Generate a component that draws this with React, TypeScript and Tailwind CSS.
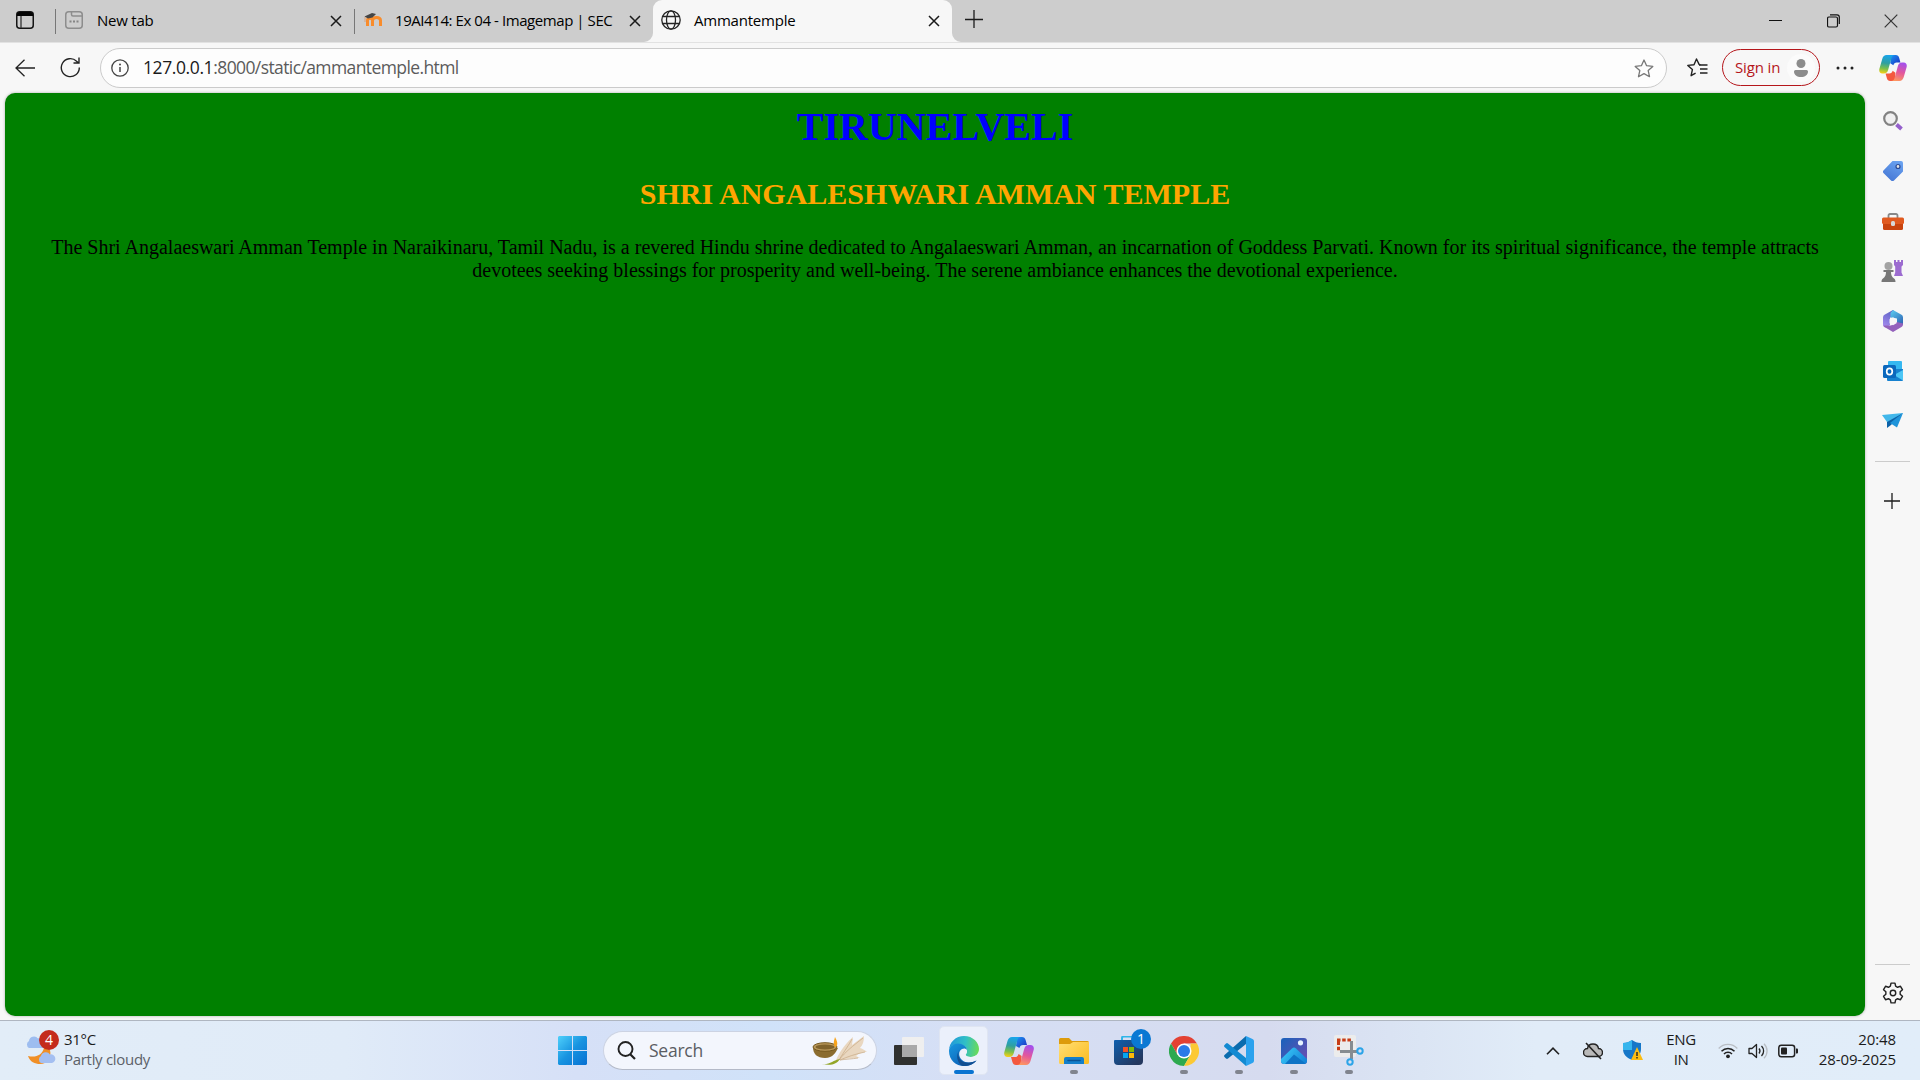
import React from "react";

type SvgProps = { w: number; h: number; vb?: string; className?: string; children: React.ReactNode };

function Svg({ w, h, vb, className, children }: SvgProps) {
  return (
    <svg width={w} height={h} viewBox={vb ?? `0 0 ${w} ${h}`} fill="none" className={`shrink-0 ${className ?? ""}`}>
      {children}
    </svg>
  );
}

function CloseX() {
  return (
    <Svg w={12} h={12}>
      <path d="M1 1l10 10M11 1L1 11" stroke="#1a1a1a" strokeWidth="1.5" />
    </Svg>
  );
}

function Copilot({ w, h, id }: { w: number; h: number; id: string }) {
  return (
    <Svg w={w} h={h} vb="0 0 30 28">
      <defs>
        <linearGradient id={`${id}a`} x1="10" y1="0" x2="7" y2="20" gradientUnits="userSpaceOnUse">
          <stop stopColor="#18a5ee" />
          <stop offset=".45" stopColor="#2f9fa0" />
          <stop offset=".75" stopColor="#7cc04a" />
          <stop offset="1" stopColor="#f2cf18" />
        </linearGradient>
        <linearGradient id={`${id}b`} x1="23" y1="8" x2="17" y2="28" gradientUnits="userSpaceOnUse">
          <stop stopColor="#a450ec" />
          <stop offset=".5" stopColor="#e3579c" />
          <stop offset="1" stopColor="#ff9a5c" />
        </linearGradient>
        <linearGradient id={`${id}c`} x1="14" y1="0" x2="22" y2="8" gradientUnits="userSpaceOnUse">
          <stop stopColor="#1b8df0" />
          <stop offset="1" stopColor="#1d3fc9" />
        </linearGradient>
      </defs>
      <path d="M13 0h5c2 0 3 1 3.600 3L23 8h-4c-2 0-3 1-3.600 3L12 9z" fill={`url(#${id}c)`} />
      <path d="M17 28h-5c-2 0-3-1-3.600-3L7 20h4c2 0 3-1 3.600-3l3 2z" fill="#f4583e" />
      <path d="M8 0h9c-2 0-3 1.200-3.600 3L9.800 16c-.8 2.800-2 4-4.500 4H3.500C.8 20-.3 17.800.3 15.200L3.500 4C4.300 1.400 5.800 0 8 0z" fill={`url(#${id}a)`} />
      <path d="M22 28h-9c2 0 3-1.200 3.600-3l3.600-13c.8-2.800 2-4 4.500-4h1.800c2.700 0 3.800 2.200 3.200 4.800L26.500 24c-.8 2.600-2.300 4-4.500 4z" fill={`url(#${id}b)`} />
    </Svg>
  );
}

function Tab({ icon, title, children }: { icon: React.ReactNode; title: string; children?: React.ReactNode }) {
  return (
    <div className="flex h-[34px] w-[299px] shrink-0 items-center">
      {children}
      <div className="flex w-5 shrink-0 justify-center">{icon}</div>
      <span className={`ml-[12px] flex-1 truncate pb-[3px] text-[15px] leading-5 ${title.length > 20 ? "tracking-[-0.43px]" : "pl-px tracking-[-0.22px]"}`}>{title}</span>
      <CloseX />
      <span className="w-[12px]" />
    </div>
  );
}

function TabStrip() {
  return (
    <header className="flex h-[42px] shrink-0 items-center bg-[#cdcdcd]">
      <div className="flex w-[55px] justify-center">
        <Svg w={18} h={18} className="mb-[2px] mr-[5px]">
          <rect x=".75" y=".75" width="16.500" height="16.500" rx="3" stroke="#151515" strokeWidth="1.500" />
          <path d="M1 5V3.500A2.500 2.500 0 013.500 1h11A2.500 2.500 0 0117 3.500V5z" fill="#050505" />
          <path d="M5 5v12" stroke="#333" strokeWidth="1.300" />
        </Svg>
      </div>
      <Tab
        title="New tab"
        icon={
          <Svg w={18} h={18} className="mb-[2px]">
            <rect x=".75" y=".75" width="16.500" height="16.500" rx="3" stroke="#8d8d8d" strokeWidth="1.500" />
            <path d="M6.500 1v2.500a1.500 1.500 0 001.500 1.500h9" stroke="#8d8d8d" strokeWidth="1.500" />
            <path d="M4.500 10.500h2M8 10.500h2M11.500 10.500h2" stroke="#858585" strokeWidth="1.800" />
          </Svg>
        }
      >
        <span className="mr-[8px] h-[25px] w-px bg-[#777]" />
      </Tab>
      <Tab
        title="19AI414: Ex 04 - Imagemap | SEC"
        icon={
          <Svg w={20} h={16} className="mb-[2px]">
            <path d="M4.500 14V8.500c0-3 5-3 5 0V14M9.500 14V8.500c0-4 8-4 8 0V14" stroke="#f98c2b" strokeWidth="3" />
            <path d="M1.500 4.500L9 1l4 1-3.500 3.500-4.500 1z" fill="#454545" />
            <path d="M2 5v5" stroke="#d9a078" strokeWidth="1" />
          </Svg>
        }
      >
        <span className="mr-[8px] h-[25px] w-px bg-[#777]" />
      </Tab>
      <div className="relative flex h-[42px] w-[299px] shrink-0 items-start rounded-t-[9px] bg-[#f7f7f7] pt-[4px]">
        <Svg w={9} h={9} className="absolute -left-[9px] bottom-0">
          <path d="M0 9a9 9 0 009-9v9z" fill="#f7f7f7" />
        </Svg>
        <Svg w={9} h={9} className="absolute -right-[9px] bottom-0">
          <path d="M9 9a9 9 0 01-9-9v9z" fill="#f7f7f7" />
        </Svg>
        <Tab
          title="Ammantemple"
          icon={
            <Svg w={20} h={20} className="mb-[2px]">
              <g stroke="#242424" strokeWidth="1.300">
                <circle cx="10" cy="10" r="9.200" />
                <ellipse cx="10" cy="10" rx="4.500" ry="9.200" />
                <path d="M2 6.500h16M2 13.500h16" />
              </g>
            </Svg>
          }
        >
          <span className="w-[8px]" />
        </Tab>
      </div>
      <Svg w={18} h={18} className="mb-[4px] ml-[13px]">
        <path d="M9 0v18M0 9.500h18" stroke="#1c1c1c" strokeWidth="1.300" />
      </Svg>
      <div className="ml-auto flex items-center pr-[22px]">
        <Svg w={13} h={14} className="mr-[45px]">
          <path d="M0 6.500h13" stroke="#111" />
        </Svg>
        <Svg w={13} h={14} className="mr-[44px]">
          <rect x=".5" y="3" width="10" height="10" rx="1.500" stroke="#111" strokeWidth="1.200" />
          <path d="M3 .8h7a2.300 2.300 0 012.300 2.300V10" stroke="#111" strokeWidth="1.200" />
        </Svg>
        <Svg w={14} h={14}>
          <path d="M.7.7l12.600 12.600M13.300.7L.7 13.300" stroke="#333" strokeWidth="1.200" />
        </Svg>
      </div>
    </header>
  );
}

const star = "M9.500 1l2.600 5.700 6.200.7-4.600 4.200 1.300 6.100-5.500-3.100L4 17.700l1.300-6.100L.7 7.400l6.200-.7z";

function Toolbar() {
  return (
    <div className="flex h-[51px] shrink-0 items-center border-t border-[#e2e2e2] bg-[#f7f7f7]">
      <Svg w={20} h={18} className="ml-[15px]">
        <path d="M9.500 .7L1 9l8.500 8.300M1 9h19" stroke="#222" strokeWidth="1.300" />
      </Svg>
      <Svg w={21} h={21} className="mb-px ml-[25px]">
        <path d="M19.300 10.500a9 9 0 11-2.700-6.300l2 1.800M19 .5v5.500h-5.500" stroke="#222" strokeWidth="1.400" />
      </Svg>
      <div className="ml-[19px] flex h-[40px] w-[1567px] shrink-0 items-center rounded-full border border-[#cbcbcb] bg-[#fdfdfd] pl-[10px] pr-[12px]">
        <Svg w={18} h={18}>
          <circle cx="9" cy="9" r="8.200" stroke="#444" strokeWidth="1.300" />
          <path d="M9 8v5" stroke="#444" strokeWidth="1.500" />
          <circle cx="9" cy="5.500" r="1" fill="#444" />
        </Svg>
        <span className="ml-[14px] flex-1 pb-[2px] text-[17.500px] tracking-[-0.6px] text-[#5b5b5b]">
          <span className="tracking-[-0.4px] text-[#1a1a1a]">127.0.0.1</span>:8000/static/ammantemple.html
        </span>
        <Svg w={20} h={19} vb="0 0 19 19">
          <path d={star} stroke="#777" strokeWidth="1.300" strokeLinejoin="round" />
        </Svg>
      </div>
      <Svg w={21} h={20} className="ml-[20px]">
        <path d="M13.500 6.800l-1.400-.4L9.500 1 7 6.700l-6.200.7 4.600 4.200-1.300 6.100 4.500-2.500" stroke="#222" strokeWidth="1.400" strokeLinejoin="round" />
        <path d="M12 7h8.500M13 11h7.500M13 15h7.500" stroke="#222" strokeWidth="1.400" />
      </Svg>
      <div className="mb-px ml-[14px] flex h-[37px] w-[98px] shrink-0 items-center rounded-full border border-[#b5161b] pl-[12px] text-[15px] text-[#b5161b]">
        <span className="whitespace-nowrap pb-px tracking-[-0.15px]">Sign in</span>
        <div className="ml-auto mr-[4px] flex h-7 w-7 items-center justify-center rounded-full bg-[#fbfbfb]">
          <Svg w={14} h={18}>
            <circle cx="7" cy="4.500" r="4.500" fill="#8c8c8c" />
            <path d="M1.500 11h11a1.500 1.500 0 011.500 1.500C14 16 11 18 7 18s-7-2-7-5.500A1.500 1.500 0 011.500 11z" fill="#8c8c8c" />
          </Svg>
        </div>
      </div>
      <Svg w={18} h={4} className="ml-[16px]">
        <g fill="#222">
          <circle cx="2" cy="2" r="1.500" />
          <circle cx="9" cy="2" r="1.500" />
          <circle cx="16" cy="2" r="1.500" />
        </g>
      </Svg>
      <div className="ml-auto mr-[13px]">
        <Copilot w={28} h={26} id="tb" />
      </div>
    </div>
  );
}

function SideSlot({ children }: { children: React.ReactNode }) {
  return <div className="flex h-[50px] w-full shrink-0 items-center justify-center">{children}</div>;
}

function Sidebar() {
  return (
    <aside className="flex w-[55px] shrink-0 flex-col items-center pt-[3px]">
      <SideSlot>
        <Svg w={20} h={20}>
          <circle cx="7.500" cy="7.500" r="6.300" fill="#f0f0f0" stroke="#828282" strokeWidth="2.200" />
          <path d="M13.500 13.500l5 4.500" stroke="#9560cc" strokeWidth="4" />
        </Svg>
      </SideSlot>
      <SideSlot>
        <Svg w={20} h={20}>
          <defs>
            <linearGradient id="tag" x1="15" y1="0" x2="5" y2="20" gradientUnits="userSpaceOnUse">
              <stop stopColor="#6aa2f0" />
              <stop offset="1" stopColor="#4577d4" />
            </linearGradient>
          </defs>
          <path d="M9.500 0H18a2 2 0 012 2v8.500L11 19.400a2 2 0 01-3 0L.7 12.200a2 2 0 010-3z" fill="url(#tag)" />
          <circle cx="15" cy="5.500" r="2" fill="#e4e4e4" stroke="#2b4a94" strokeWidth="1.200" />
        </Svg>
      </SideSlot>
      <SideSlot>
        <Svg w={22} h={17}>
          <path d="M6.500 5V2.500A1.500 1.500 0 018 1h6a1.500 1.500 0 011.500 1.500V5" stroke="#888" strokeWidth="1.800" />
          <path d="M1 10h20v5.500a1.500 1.500 0 01-1.500 1.500h-17A1.500 1.500 0 011 15.500z" fill="#c9440f" />
          <rect y="4.500" width="22" height="6.500" rx="1.500" fill="#e05a20" />
          <rect x="9" y="8" width="4" height="5" rx="1.500" fill="#d8d8d8" />
        </Svg>
      </SideSlot>
      <SideSlot>
        <Svg w={23} h={23}>
          <path d="M13 0h2v2h1.500V0h2v2H20V0h2v5l-1.500 1.500v6L22 16h-9l1.200-3.500v-6L13 5z" fill="#9c6bd0" />
          <circle cx="7.500" cy="6" r="4" fill="#a3a3a3" />
          <path d="M2.500 10h10v2H10c0 3 .8 5 3 6.500.9.700 1.500 1.500 1.500 3.500H.5c0-2 .6-2.800 1.500-3.500C4.200 17 5 15 5 12H2.500z" fill="#777" />
        </Svg>
      </SideSlot>
      <SideSlot>
        <Svg w={20} h={22}>
          <defs>
            <linearGradient id="m1" x1="10" y1="0" x2="2" y2="18" gradientUnits="userSpaceOnUse">
              <stop stopColor="#5a62c4" />
              <stop offset="1" stopColor="#a78cf0" />
            </linearGradient>
            <linearGradient id="m2" x1="8" y1="2" x2="20" y2="15" gradientUnits="userSpaceOnUse">
              <stop stopColor="#58c4ec" />
              <stop offset="1" stopColor="#2c5fb0" />
            </linearGradient>
          </defs>
          <path d="M10 0L1.500 4.800A3 3 0 000 7.400v7.200A3 3 0 003 17.500l4-2.500V8l5-6z" fill="url(#m1)" />
          <path d="M10 0l8.500 4.800A3 3 0 0120 7.400V15l-6-2V8.500L7.500 7.500V3z" fill="url(#m2)" />
          <path d="M20 13.500v1a3 3 0 01-1.500 2.600L10 22l-8.500-4.900L.3 15.500 8 15.500l6-3.500z" fill="#9462bc" />
          <path d="M10 7.200l3.500 2v4l-3.500 2-3.500-2v-4z" fill="#f7f7f7" />
        </Svg>
      </SideSlot>
      <SideSlot>
        <Svg w={20} h={20}>
          <rect x="5" width="14" height="9" rx="1" fill="#35b8f1" />
          <path d="M4 8h16v11a1 1 0 01-1 1H5a1 1 0 01-1-1z" fill="#1681cf" />
          <path d="M20 9v10.500L11 14z" fill="#4cc6f5" />
          <rect y="4" width="13" height="13" rx="1.500" fill="#0b68bd" />
          <ellipse cx="6.500" cy="10.500" rx="2.800" ry="3.200" stroke="#fff" strokeWidth="1.700" />
        </Svg>
      </SideSlot>
      <SideSlot>
        <Svg w={22} h={16}>
          <path d="M0 2l21-2-9 8-7 1z" fill="#42b7ea" />
          <path d="M21 0L5 9v6l4-3z" fill="#0c62a8" />
          <path d="M21 0L8 10l7 4.500z" fill="#1e94da" />
        </Svg>
      </SideSlot>
      <div className="mt-[15px] h-px w-[35px] bg-[#cccccc]" />
      <Svg w={16} h={16} className="mr-px mt-[31px]">
        <path d="M8 0v16M0 8h16" stroke="#1c1c1c" strokeWidth="1.300" />
      </Svg>
      <div className="mt-auto h-px w-[35px] bg-[#cccccc]" />
      <Svg w={22} h={22} vb="0 0 20 20" className="mb-[16px] mt-[17px]">
        <path
          d="M8.200 1h3.600l.6 2.800 1.700 1 2.700-.9 1.800 3.100-2.100 1.900v2.200l2.100 1.900-1.800 3.100-2.700-.9-1.700 1-.6 2.800H8.200l-.6-2.800-1.700-1-2.700.9-1.800-3.100 2.100-1.900V8.900L1.400 7l1.800-3.100 2.700.9 1.700-1z"
          stroke="#222"
          strokeWidth="1.300"
          strokeLinejoin="round"
        />
        <circle cx="10" cy="10" r="2.500" stroke="#222" strokeWidth="1.300" />
      </Svg>
    </aside>
  );
}

function TaskSlot({ children, mark }: { children: React.ReactNode; mark?: boolean }) {
  return (
    <div className="relative flex h-[59px] w-[55px] shrink-0 items-center justify-center">
      {children}
      {mark && <span className="absolute bottom-[6px] h-1 w-2 rounded-full bg-[#80848e]" />}
    </div>
  );
}

function Edge() {
  return (
    <Svg w={30} h={30}>
      <defs>
        <linearGradient id="e1" x1="2" y1="8" x2="30" y2="12" gradientUnits="userSpaceOnUse">
          <stop stopColor="#239cd8" />
          <stop offset=".5" stopColor="#30bfc6" />
          <stop offset="1" stopColor="#6bdc55" />
        </linearGradient>
        <linearGradient id="e2" x1="0" y1="10" x2="14" y2="30" gradientUnits="userSpaceOnUse">
          <stop stopColor="#1794dc" />
          <stop offset="1" stopColor="#0d62b8" />
        </linearGradient>
      </defs>
      <path d="M0 15C0 6 7 0 15 0c9 0 15 6.500 15 13 0 5-4 8-8.500 8-3 0-5-1-5-2.200 0-.8 1.500-1.300 1.500-3.800C18 11 14 8 9 8c-5 0-9 3-9 7z" fill="url(#e1)" />
      <path d="M0 15c0-4 4-7.500 9-7.500 5 0 8.500 3 9 6.500-1-1.500-3-2-5-1-4 2-3.500 8 0 11 4 3.500 10 3 14.500.5C25 28 20.500 30 15 30 7 30 0 24 0 15z" fill="url(#e2)" />
      <path d="M11.500 13c-3.500 3-2.500 8.500.5 11.200 4.500 3.800 10.500 2.800 15.500.3-3 4-8 5.700-13 5.500-6-1-9-12-3-17z" fill="#124f91" />
      <path d="M12 17c.5-3 2.500-4.500 5-3.500 2 1 .5 4.500-.5 5.300.5 1.500 3 2.200 5 2.200 2.500 0 4-.6 5.500-1.500 0 2-2 3.500-6 3.500-5 0-9-2-9-6z" fill="#eef2fb" />
    </Svg>
  );
}

function Taskbar() {
  return (
    <footer className="flex h-[60px] shrink-0 items-center border-t border-[#afb6c1] bg-[linear-gradient(90deg,#e2edf8_0%,#e0ebf8_18%,#d6e0f7_30%,#d0e2f9_40%,#d6dff5_50%,#d6dbef_66%,#dbe5f4_74%,#e1ecf8_80%,#e1edf9_100%)]">
      <div className="flex w-[545px] shrink-0 items-center pl-[25px]">
        <div className="relative h-[36px] w-[34px]">
          <Svg w={34} h={36} className="-mt-px">
            <path d="M25 18c2 8-3 14-10 14-5 0-10-2-12-8 8 2 14-1 16-8z" fill="#f08f26" />
            <path d="M4 16a4 4 0 010-7 5 5 0 019-2.500 4.500 4.500 0 015 9.500z" fill="#9dbdf0" />
            <path d="M16 31a4 4 0 010-7 5 5 0 019-1.500A4.300 4.300 0 0127 31z" fill="#a4bff1" />
          </Svg>
          <span className="absolute -top-[3px] left-[14px] flex h-5 w-5 items-center justify-center rounded-full bg-[#c42b1c] text-[14px] leading-5 text-white">4</span>
        </div>
        <div className="-mt-[4px] ml-[5px] text-[15px] leading-5 tracking-[-0.3px]">
          <div className="text-[#1b1b1b]">31°C</div>
          <div className="text-[#5c6168]">Partly cloudy</div>
        </div>
      </div>
      <TaskSlot>
        <Svg w={29} h={29}>
          <defs>
            <linearGradient id="win" x1="0" y1="0" x2="29" y2="29" gradientUnits="userSpaceOnUse">
              <stop stopColor="#4fd0fb" />
              <stop offset=".5" stopColor="#1793e0" />
              <stop offset="1" stopColor="#0870d2" />
            </linearGradient>
          </defs>
          <path d="M1 0h13v14H0V1zM15 0h13l1 1v13H15zM0 15h14v14H1l-1-1zM15 15h14v13l-1 1H15z" fill="url(#win)" />
        </Svg>
      </TaskSlot>
      <div className="ml-[3px] flex h-[39px] w-[274px] shrink-0 items-center rounded-full border border-[#ccd3e3] border-b-[#b4bac8] bg-[#f3f6fd] pl-[13px] pr-[8px]">
        <Svg w={19} h={19}>
          <circle cx="8.500" cy="8" r="7" stroke="#222" strokeWidth="1.900" />
          <path d="M13 13l5 5" stroke="#222" strokeWidth="2.200" />
        </Svg>
        <span className="ml-[13px] flex-1 text-[17.500px] tracking-[-0.25px] text-[#5a5d63]">Search</span>
        <Svg w={56} h={32}>
          <path d="M24 25C29 14 36 6 41 2l-1 8C44 7 48 4 52 1c0 5-1 9-4 12 3 1 5 2 7 4-5 0-7 1-11 4l4 2c-8 0-14 0-24 3z" fill="#e9d7c0" />
          <path d="M27 25C34 16 41 11 51 3M27 25C33 15 37 10 40 4M28 25c7-3 15-6 25-8M28 25c7-1 12-1 18-2" stroke="#cbae8b" strokeWidth=".8" />
          <path d="M10 29c8 1 11-4 18-5-3 5-9 7-18 5z" fill="#93a629" />
          <path d="M1 12c0 7 4 11 12 11s11-6 13-10z" fill="#8b6c2f" />
          <ellipse cx="13" cy="12" rx="12" ry="4.300" fill="#b9985a" stroke="#75581f" />
          <ellipse cx="13" cy="12" rx="9.500" ry="2.500" fill="#80632c" />
          <path d="M23 12c-2-4-1-6 0-10 2 4 3.500 7 1 10z" fill="#f8a41c" />
        </Svg>
      </div>
      <div className="ml-[4px] flex items-center">
        <TaskSlot>
          <Svg w={30} h={28}>
            <rect y="8" width="23" height="20" rx="1" fill="#30312f" />
            <rect x="8" width="22" height="20" rx="1" fill="#efefef" />
            <path d="M8 8h15v12H9l-1-1z" fill="#a9a9a9" />
          </Svg>
        </TaskSlot>
        <div className="flex h-[59px] w-[55px] items-center justify-center">
          <div className="relative flex h-[49px] w-[49px] items-center justify-center rounded-[5px] border border-[#dfe5f2] bg-[#ebf0fb]">
            <Edge />
            <span className="absolute bottom-0 h-1 w-5 rounded-full bg-[#0a74d1]" />
          </div>
        </div>
        <TaskSlot>
          <Copilot w={30} h={28} id="dock" />
        </TaskSlot>
        <TaskSlot mark>
          <Svg w={30} h={26}>
            <defs>
              <linearGradient id="fold" x1="5" y1="3" x2="25" y2="26" gradientUnits="userSpaceOnUse">
                <stop stopColor="#ffdc70" />
                <stop offset="1" stopColor="#fdbf26" />
              </linearGradient>
            </defs>
            <path d="M0 1.500A1.500 1.500 0 011.500 0H10l3 3h15.500A1.500 1.500 0 0130 4.500V8H0z" fill="#dd9b0b" />
            <path d="M0 6h11l3-2h16v20.500a1.500 1.500 0 01-1.500 1.500h-27A1.500 1.500 0 010 24.500z" fill="url(#fold)" />
            <path d="M5 26v-5a2 2 0 012-2h16a2 2 0 012 2v5z" fill="#147fcb" />
            <path d="M9 22.500h12" stroke="#0a5394" strokeWidth="1.500" strokeLinecap="round" />
          </Svg>
        </TaskSlot>
        <TaskSlot>
          <Svg w={29} h={29}>
            <defs>
              <linearGradient id="store" x1="0" y1="4" x2="20" y2="29" gradientUnits="userSpaceOnUse">
                <stop stopColor="#0f5fae" />
                <stop offset="1" stopColor="#24385f" />
              </linearGradient>
            </defs>
            <path d="M8 6V2a1.500 1.500 0 011.500-1.500h10A1.500 1.500 0 0121 2v4" stroke="#2fb5e8" strokeWidth="2" />
            <path d="M1 4h27a1 1 0 011 1v20a4 4 0 01-4 4H4a4 4 0 01-4-4V5a1 1 0 011-1z" fill="url(#store)" />
            <path d="M9 11h5v5H9z" fill="#f35325" />
            <path d="M15 11h5v5h-5z" fill="#81bc06" />
            <path d="M9 17h5v5H9z" fill="#05a6f0" />
            <path d="M15 17h5v5h-5z" fill="#ffba08" />
          </Svg>
          <span className="absolute left-[30px] top-[8px] flex h-5 w-5 items-center justify-center rounded-full bg-[#0a78d3] text-[14px] leading-5 text-white">1</span>
        </TaskSlot>
        <TaskSlot mark>
          <Svg w={30} h={30}>
            <path d="M2 7.500A15 15 0 0128 7.500H15L8.500 18.800z" fill="#e34133" />
            <path d="M2 7.500A15 15 0 0015 30l6.500-11.200h-13z" fill="#2da94f" />
            <path d="M28 7.500A15 15 0 0115 30l6.500-11.300L21.500 7.500z" fill="#fcc934" />
            <circle cx="15" cy="15" r="7.500" fill="#fff" />
            <circle cx="15" cy="15" r="6" fill="#2a7ae8" />
          </Svg>
        </TaskSlot>
        <TaskSlot mark>
          <Svg w={30} h={30}>
            <path d="M22 0v8L4 22.500a1.500 1.500 0 01-2 0l-1.500-1.500a1.500 1.500 0 010-2z" fill="#0b6cae" />
            <path d="M22 30v-8L4 7.500a1.500 1.500 0 00-2 0L.5 9a1.500 1.500 0 000 2z" fill="#138ad2" />
            <path d="M22 0l6.500 3A2.500 2.500 0 0130 5v20a2.500 2.500 0 01-1.500 2L22 30z" fill="#2ba2ee" />
          </Svg>
        </TaskSlot>
        <TaskSlot mark>
          <Svg w={26} h={26}>
            <defs>
              <linearGradient id="ph" x1="0" y1="0" x2="24" y2="20" gradientUnits="userSpaceOnUse">
                <stop stopColor="#1862bb" />
                <stop offset="1" stopColor="#6450b2" />
              </linearGradient>
              <linearGradient id="ph2" x1="5" y1="14" x2="22" y2="26" gradientUnits="userSpaceOnUse">
                <stop stopColor="#33bdf2" />
                <stop offset="1" stopColor="#1585d8" />
              </linearGradient>
            </defs>
            <rect width="26" height="26" rx="3" fill="url(#ph)" />
            <path d="M0 21L11 10.500a3 3 0 014 0L26 21v2a3 3 0 01-3 3H3a3 3 0 01-3-3z" fill="url(#ph2)" />
            <path d="M13 16.500L24.500 25.500 23 26H4z" fill="#0f74c6" />
            <circle cx="19.500" cy="4.800" r="2.600" fill="#e7f3ff" />
          </Svg>
        </TaskSlot>
        <TaskSlot mark>
          <Svg w={31} h={31}>
            <rect x="1" width="22" height="22" rx="2" fill="#ececec" />
            <path d="M4 5h14M5.500 6.500V17" stroke="#c83c16" strokeWidth="3" strokeDasharray="3.500 1.700" />
            <path d="M7 16.500h17M18.500 6v18" stroke="#868c91" strokeWidth="3" />
            <circle cx="27" cy="16" r="2.700" stroke="#2ca4e8" strokeWidth="2" />
            <circle cx="17" cy="27" r="2.700" stroke="#2ca4e8" strokeWidth="2" />
          </Svg>
        </TaskSlot>
      </div>
      <div className="ml-auto flex items-center pr-[24px] text-[15px] leading-5 text-[#1b1b1b]">
        <Svg w={14} h={8} className="mr-[23px]">
          <path d="M1 7.200L7 1.200l6 6" stroke="#222" strokeWidth="1.600" />
        </Svg>
        <Svg w={20} h={18} className="mr-[20px]">
          <path d="M4.500 14.500a4 4 0 010-8c1-6 10-6 11 0a4 4 0 010 8z" fill="#b9b9b9" stroke="#222" strokeWidth="1.400" />
          <path d="M3 1l15 16" stroke="#222" strokeWidth="1.600" />
        </Svg>
        <Svg w={20} h={21} className="mr-[23px]">
          <path d="M0 3c4 0 6-1 9-3 3 2 5 3 9 3v6c0 5-3 8.500-9 11C3 17.500 0 14 0 9z" fill="#1677c8" />
          <path d="M0 3c4 0 6-1 9-3v10H0z" fill="#35b5ed" />
          <path d="M14 7l6 13H8z" fill="#fbbd12" />
          <path d="M14 12v4M14 17v1.500" stroke="#222" strokeWidth="1.400" />
        </Svg>
        <div className="-mt-[3px] mr-[22px] w-[30px] text-center tracking-[-0.4px]">
          <div>ENG</div>
          <div>IN</div>
        </div>
        <Svg w={20} h={16} className="mr-[10px]">
          <path d="M.7 5.500a12.500 12.500 0 0118.600 0" stroke="#b9bec4" strokeWidth="1.300" />
          <path d="M3.500 8.300a9 9 0 0113 0M6 11a5.600 5.600 0 018 0" stroke="#222" strokeWidth="1.500" />
          <circle cx="10" cy="13.300" r="1.900" fill="#222" />
        </Svg>
        <Svg w={20} h={16} className="mr-[10px]">
          <path d="M1 5.500h3L8.500 1.500v13L4 10.500H1z" stroke="#222" strokeWidth="1.300" strokeLinejoin="round" />
          <path d="M11 5.500a4 4 0 010 5M13.500 3a7 7 0 010 10" stroke="#222" strokeWidth="1.300" />
          <path d="M16 .8a10 10 0 010 14.400" stroke="#b9bec4" strokeWidth="1.300" />
        </Svg>
        <Svg w={20} h={14}>
          <rect x=".8" y="1.300" width="15.800" height="11.400" rx="2.500" stroke="#222" strokeWidth="1.500" />
          <rect x="3" y="3.500" width="6" height="7" rx="1" fill="#222" />
          <path d="M18 4.500h1a1 1 0 011 1v3a1 1 0 01-1 1h-1z" fill="#222" />
        </Svg>
        <div className="-mt-[4px] w-[98px] whitespace-nowrap text-right tracking-[-0.1px]">
          <div>20:48</div>
          <div>28-09-2025</div>
        </div>
      </div>
    </footer>
  );
}

export default function App() {
  return (
    <div className="flex h-[1080px] w-[1920px] flex-col overflow-hidden bg-[#f7f7f7] font-['Open_Sans','Noto_Sans',sans-serif] text-black">
      <TabStrip />
      <Toolbar />
      <div className="flex h-[927px] shrink-0 pl-[5px]">
        <main className="h-[923px] w-[1860px] shrink-0 rounded-[10px] bg-[#008000] px-[40px] pt-[11px] text-center font-['Liberation_Serif',serif] shadow-[0_0_3px_rgba(0,0,0,0.3)]">
          <h1 className="text-[40px] font-bold leading-[46px] text-[#0000ff]">TIRUNELVELI</h1>
          <h2 className="mt-[27px] text-[30px] font-bold leading-[34px] text-[#ffa500]">SHRI ANGALESHWARI AMMAN TEMPLE</h2>
          <p className="mt-[25px] text-[20px] leading-[23px]">
            The Shri Angalaeswari Amman Temple in Naraikinaru, Tamil Nadu, is a revered Hindu shrine dedicated to Angalaeswari Amman, an incarnation of Goddess Parvati. Known for its spiritual significance, the temple attracts devotees seeking blessings for prosperity and well-being. The serene ambiance enhances the devotional experience.
          </p>
        </main>
        <Sidebar />
      </div>
      <Taskbar />
    </div>
  );
}
